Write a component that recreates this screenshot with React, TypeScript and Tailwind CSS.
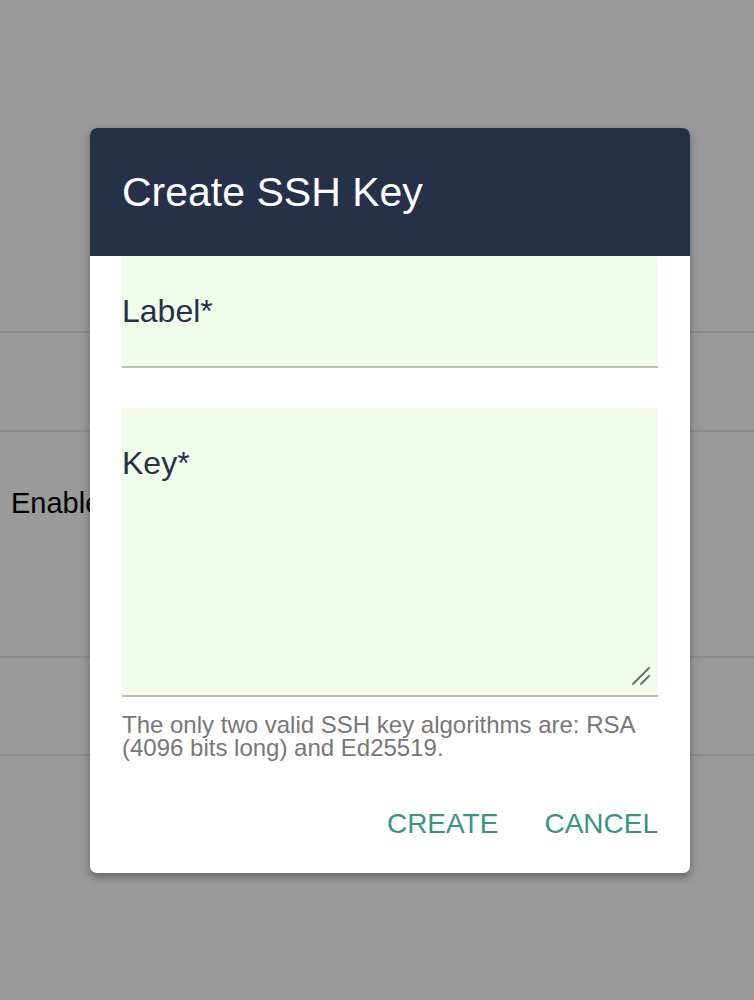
import React from 'react';

const font = { fontFamily: '"Liberation Sans", Arial, Helvetica, sans-serif' };

function ResizeGrip() {
  return (
    <svg className="absolute right-[6px] bottom-[8px]" width="22" height="22" viewBox="0 0 22 22">
      <line x1="3" y1="19" x2="19" y2="3" stroke="#6b6f68" strokeWidth="2" strokeLinecap="round" />
      <line x1="11" y1="19" x2="19" y2="11" stroke="#6b6f68" strokeWidth="2" strokeLinecap="round" />
    </svg>
  );
}

function Field({ label, height, grip }: { label: string; height: string; grip?: boolean }) {
  return (
    <div className={`relative bg-[#f1fdea] border-b-2 border-[#b7c0b1] pt-[39px] ${height}`}>
      <span className="block text-[32px] leading-none text-[#253149]">{label}</span>
      {grip && <ResizeGrip />}
    </div>
  );
}

export default function App() {
  return (
    <div className="relative h-[1000px] w-full overflow-hidden bg-[#9a9a9a]" style={font}>
      {/* page behind the overlay */}
      <div className="flex flex-col pt-[331px]">
        <div className="h-[99px] border-t-2 border-[#8b8b8b]" />
        <div className="h-[226px] border-t-2 border-[#8b8b8b] pl-[11px] pt-[57px]">
          <span className="block text-[29px] leading-none text-black">Enable</span>
        </div>
        <div className="h-[98px] border-t-2 border-[#8b8b8b]" />
        <div className="border-t-2 border-[#8b8b8b]" />
      </div>

      {/* dialog */}
      <div className="absolute left-[90px] top-[128px] w-[600px] rounded-[7px] bg-white shadow-[0_4px_8px_rgba(0,0,0,0.35)] overflow-hidden">
        <div className="h-[128px] bg-[#253149] flex items-center px-8">
          <h1 className="text-[41px] leading-none text-white">Create SSH Key</h1>
        </div>
        <div className="px-8 pb-[35px]">
          <Field label="Label*" height="h-[112px]" />
          <div className="mt-[40px]">
            <Field label="Key*" height="h-[289px]" grip />
          </div>
          <p className="mt-[16px] text-[24px] leading-[23px] text-[#777777]">
            The only two valid SSH key algorithms are: RSA
            <br />
            (4096 bits long) and Ed25519.
          </p>
          <div className="mt-[51px] flex justify-end gap-[46px] text-[28px] leading-none text-[#3a9484]">
            <button>CREATE</button>
            <button>CANCEL</button>
          </div>
        </div>
      </div>
    </div>
  );
}
